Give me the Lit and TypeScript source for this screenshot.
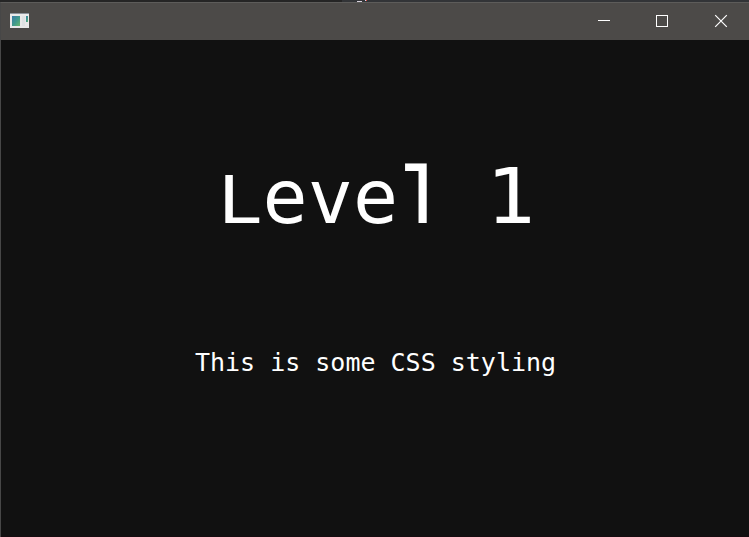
import { LitElement, html, css } from "lit";
import { customElement } from "lit/decorators.js";

@customElement("app-root")
export class AppRoot extends LitElement {
  static styles = css`
    :host { display: flex; flex-direction: column; width: 100vw; height: 100vh; box-sizing: border-box; overflow: hidden; background: #111; color: #fff; font-family: "DejaVu Sans Mono", "Liberation Mono", monospace; }
    .backdrop { display: block; flex: none; width: 100%; height: 2px; background: #323437; }
    .window { flex: 1; min-height: 0; display: flex; flex-direction: column; border-left: 1px solid #474747; border-top: 1px solid #5d5c5a; }
    .bar { height: 37px; flex: none; display: flex; align-items: center; background: #4c4a48; }
    .app { display: block; margin-left: 9px; margin-top: -2px; }
    .controls { margin-left: auto; display: flex; height: 100%; }
    .control { width: 58px; height: 37px; display: block; }
    .content { flex: 1; display: flex; flex-direction: column; align-items: center; border-bottom: 1px solid #160c10; padding-left: 1px; }
    .title { margin: 113px 0 0; font-size: 75px; line-height: 88px; font-weight: 400; white-space: pre; }
    .cap { display: inline-block; transform: scaleY(.87); transform-origin: 0 70px; line-height: 88px; }
    .ell { display: inline-block; line-height: 88px; transform: scale(1.25, 1.41); transform-origin: 1px 17.8px; clip-path: inset(0 22px 33.2px 0); }
    .one { display: inline-block; line-height: 88px; transform: scale(1.1, 1.03); transform-origin: 50% 70px; }
    .subtitle { margin: 107px 0 0; font-size: 25px; line-height: 30px; white-space: pre; }
  `;

  render() {
    return html`
      <svg class="backdrop" viewBox="0 0 749 2" preserveAspectRatio="none" shape-rendering="crispEdges">
        <path d="M0 0H342V2H0z" fill="#252525"/><path d="M357 1h5v1h-5z" fill="#d8d1dd"/><path d="M366 0h1v1h-1z" fill="#e44b43"/><path d="M365 0h1v1h-1z" fill="#c8d8ee"/>
      </svg>
      <div class="window">
        <div class="bar">
          <svg class="app" width="19" height="15" viewBox="0 0 19 15">
            <defs><linearGradient id="screen" x2="1" y2="1"><stop stop-color="#397aa6"/><stop offset=".55" stop-color="#419b8b"/><stop offset="1" stop-color="#69b76d"/></linearGradient></defs>
            <path fill="#e9e9e9" d="M0 0h19v15H0z"/><path fill="#8b929a" d="M0 0h19v1H0z"/>
            <path fill="url(#screen)" d="M2 3h8v10H2z"/><path fill="#dfe2e4" d="M12 3h3v10h-3z"/><path fill="url(#screen)" d="M16 3h2v6h-2z"/>
          </svg>
          <div class="controls">
            <svg class="control" viewBox="0 0 58 37"><path d="M23 17.5h12" stroke="#fff"/></svg>
            <svg class="control" viewBox="0 0 58 37" shape-rendering="crispEdges"><path d="M23.5 12.5h11v11h-11z" fill="none" stroke="#fff"/></svg>
            <svg class="control" viewBox="0 0 58 37"><path d="M24.2 12.2l11.6 11.6m0-11.6L24.2 23.8" fill="none" stroke="#fff" stroke-width="1.2"/></svg>
          </div>
        </div>
        <main class="content">
          <h1 class="title"><span class="cap">L</span>eve<span class="ell">l</span> <span class="one">1</span></h1>
          <div class="subtitle">This is some CSS styling</div>
        </main>
      </div>
    `;
  }
}
